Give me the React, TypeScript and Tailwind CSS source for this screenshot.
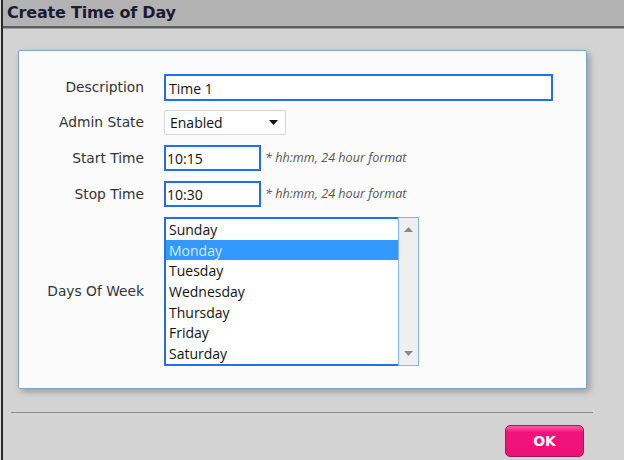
import { FC } from "react";

const days = [
  "Sunday",
  "Monday",
  "Tuesday",
  "Wednesday",
  "Thursday",
  "Friday",
  "Saturday",
];

const Label: FC<{ text: string }> = ({ text }) => (
  <div className="w-[125px] shrink-0 text-right text-[13.8px] text-[#333] font-['DejaVu_Sans',sans-serif]">
    {text}
  </div>
);

const Hint = () => (
  <span className="ml-[4px] text-[12.6px] italic text-[#555] font-['Open_Sans',sans-serif]">
    * hh:mm, 24 hour format
  </span>
);

const TimeInput: FC<{ value: string }> = ({ value }) => (
  <div className="flex items-center">
    <div className="h-[26px] w-[97px] border-2 border-[#1f6ff0] bg-white pl-[1px] pt-px flex items-center text-[14px] text-[#111] font-['Open_Sans',sans-serif]">
      {value}
    </div>
    <Hint />
  </div>
);

const App = () => {
  return (
    <div className="w-[624px] h-[460px] overflow-hidden bg-[#dcdcdc] pl-px">
      <div className="h-full border-l-2 border-[#2a2a2a] bg-[#d3d3d3] flex flex-col">
        {/* title bar */}
        <div className="h-[28px] shrink-0 bg-[#b3b3b3] border-b-2 border-[#5c5c5c] pl-[4px] flex items-center">
          <span className="text-[16px] font-bold text-[#1b1b33] font-['DejaVu_Sans',sans-serif] tracking-[-0.2px]">
            Create Time of Day
          </span>
        </div>
        <div className="h-px bg-[#9a9a9a]" />

        <div className="flex-1 pl-[15px] pr-[34px] pt-[21px]">
          {/* card */}
          <div className="h-[339px] w-[569px] rounded-[2px] border border-[#7fa4bc] bg-[#fbfbfb] shadow-[3px_3px_6px_rgba(0,0,0,0.25)] pt-[23px] flex flex-col gap-[9px]">
            <div className="flex items-center gap-[20px]">
              <Label text="Description" />
              <div className="h-[27px] w-[389px] border-2 border-[#1f6ff0] bg-white pl-[3px] pt-px flex items-center text-[14px] text-[#111] font-['Open_Sans',sans-serif]">
                Time 1
              </div>
            </div>

            <div className="flex items-center gap-[20px]">
              <Label text="Admin State" />
              <div className="h-[25px] w-[122px] rounded-[2px] border border-[#d6d6d6] bg-white pl-[5px] pr-[7px] flex items-center justify-between text-[14px] text-[#111] font-['Open_Sans',sans-serif]">
                <span>Enabled</span>
                <svg width="9" height="5" viewBox="0 0 9 5">
                  <path d="M0 0h9L4.5 5z" fill="#111" />
                </svg>
              </div>
            </div>

            <div className="flex items-center gap-[20px] mt-px">
              <Label text="Start Time" />
              <TimeInput value="10:15" />
            </div>

            <div className="flex items-center gap-[20px] mt-px">
              <Label text="Stop Time" />
              <TimeInput value="10:30" />
            </div>

            <div className="flex items-center gap-[20px] mt-px">
              <Label text="Days Of Week" />
              <div className="flex h-[149px] w-[255px]">
                <div className="flex-1 border-2 border-r-0 border-[#1f6ff0] bg-white flex flex-col">
                  {days.map((d) => (
                    <div
                      key={d}
                      className={`h-[20.7px] leading-[22px] pl-[3px] text-[14px] font-['Open_Sans',sans-serif] ${
                        d === "Monday"
                          ? "bg-[#3399ff] text-[#d3e8ff]"
                          : "text-[#111]"
                      }`}
                    >
                      {d}
                    </div>
                  ))}
                </div>
                <div className="w-[21px] border border-[#86b4ff] bg-[#efefef] flex flex-col items-center justify-between py-[9px]">
                  <svg width="9" height="5" viewBox="0 0 9 5">
                    <path d="M0 5h9L4.5 0z" fill="#8a8a8a" />
                  </svg>
                  <svg width="9" height="5" viewBox="0 0 9 5">
                    <path d="M0 0h9L4.5 5z" fill="#8a8a8a" />
                  </svg>
                </div>
              </div>
            </div>
          </div>

          {/* footer */}
          <div className="mt-[23px] -ml-[7px] w-[582px] h-px bg-[#8c8c8c]" />
          <div className="mt-[12px] flex justify-end pr-[6px]">
            <button className="h-[32px] w-[79px] rounded-[5px] border border-[#a0175c] bg-gradient-to-b from-[#f65aa5] from-0% via-[#f0137c] via-20% to-[#ee1177] text-white text-[14px] font-bold font-['DejaVu_Sans',sans-serif]">
              OK
            </button>
          </div>
        </div>
      </div>
    </div>
  );
};

export default App;
